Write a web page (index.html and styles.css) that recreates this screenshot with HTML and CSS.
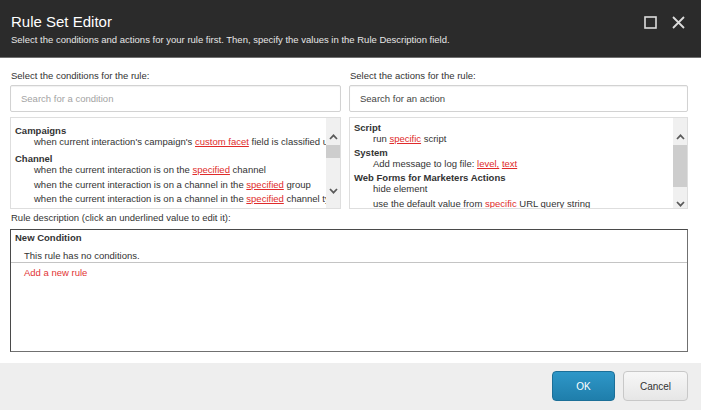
FILE: index.html
```
<!DOCTYPE html>
<html>
	<head>
		<meta charset="utf-8">
		<title>Rule Set Editor</title>
		<link rel="stylesheet" href="styles.css">
	</head>
	<body>
		<div class="dialog">
			<!-- 头部 -->
			<div class="hd">
				<div class="hd_text">
					<h1>Rule Set Editor</h1>
					<p>Select the conditions and actions for your rule first. Then, specify the values in the Rule Description field.</p>
				</div>
				<div class="hd_btns">
					<svg width="13" height="13" viewBox="0 0 13 13"><rect x="1" y="1" width="11" height="11" fill="none" stroke="#dcdcdc" stroke-width="1.6"/></svg>
					<svg width="13" height="13" viewBox="0 0 13 13"><path d="M1 1 L12 12 M12 1 L1 12" stroke="#dcdcdc" stroke-width="1.8"/></svg>
				</div>
			</div>

			<!-- 内容 -->
			<div class="bd">
				<div class="cols">
					<div class="col">
						<div class="label">Select the conditions for the rule:</div>
						<div class="search placeholder">Search for a condition</div>
						<div class="list list_left">
							<div class="items">
								<div class="group">
									<div class="title">Campaigns</div>
									<div class="item">when current interaction's campaign's <a>custom facet</a> field is classified under the specified</div>
								</div>
								<div class="group">
									<div class="title">Channel</div>
									<div class="item">when the current interaction is on the <a>specified</a> channel</div>
									<div class="item">when the current interaction is on a channel in the <a>specified</a> group</div>
									<div class="item">when the current interaction is on a channel in the <a>specified</a> channel type</div>
								</div>
							</div>
							<div class="bar">
								<div class="up"><svg width="9" height="6" viewBox="0 0 9 6"><polyline points="1,5 4.5,1.3 8,5" fill="none" stroke="#5a5a5a" stroke-width="1.7"/></svg></div>
								<div class="thumb"></div>
								<div class="space"></div>
								<div class="down"><svg width="9" height="6" viewBox="0 0 9 6"><polyline points="1,1 4.5,4.7 8,1" fill="none" stroke="#5a5a5a" stroke-width="1.7"/></svg></div>
							</div>
						</div>
					</div>
					<div class="col">
						<div class="label">Select the actions for the rule:</div>
						<div class="search">Search for an action</div>
						<div class="list list_right">
							<div class="items">
								<div class="group">
									<div class="title">Script</div>
									<div class="item">run <a>specific</a> script</div>
								</div>
								<div class="group">
									<div class="title">System</div>
									<div class="item">Add message to log file: <a>level,</a> <a>text</a></div>
								</div>
								<div class="group">
									<div class="title">Web Forms for Marketers Actions</div>
									<div class="item">hide element</div>
									<div class="item">use the default value from <a>specific</a> URL query string</div>
								</div>
							</div>
							<div class="bar">
								<div class="up"><svg width="9" height="6" viewBox="0 0 9 6"><polyline points="1,5 4.5,1.3 8,5" fill="none" stroke="#5a5a5a" stroke-width="1.7"/></svg></div>
								<div class="thumb"></div>
								<div class="space"></div>
								<div class="down"><svg width="9" height="6" viewBox="0 0 9 6"><polyline points="1,1 4.5,4.7 8,1" fill="none" stroke="#5a5a5a" stroke-width="1.7"/></svg></div>
							</div>
						</div>
					</div>
				</div>

				<div class="label label_desc">Rule description (click an underlined value to edit it):</div>
				<div class="desc">
					<div class="desc_title">New Condition</div>
					<div class="desc_none">This rule has no conditions.</div>
					<div class="desc_add">Add a new rule</div>
				</div>
			</div>

			<!-- 底部按钮 -->
			<div class="ft">
				<button type="button" class="ok">OK</button>
				<button type="button" class="cancel">Cancel</button>
			</div>
		</div>
	</body>
</html>
```

FILE: styles.css
```
*{
	margin: 0;
	padding: 0;
	box-sizing: border-box;
}
body{
	width: 701px;
	height: 410px;
	overflow: hidden;
	background-color: #fff;
	font-family: "Liberation Sans", Arial, sans-serif;
	font-size: 9.5px;
	color: #333;
}
.dialog{
	display: flex;
	flex-direction: column;
	height: 410px;
}

/* 头部 */
.hd{
	display: flex;
	justify-content: space-between;
	height: 58px;
	padding: 13px 16px 0 11px;
	background-color: #2b2b2b;
	border-bottom: 1px solid #707070;
}
.hd h1{
	font-size: 15px;
	font-weight: normal;
	line-height: 18px;
	color: #fff;
}
.hd p{
	margin-top: 3px;
	font-size: 9.5px;
	line-height: 12px;
	color: #e6e6e6;
}
.hd_btns{
	display: flex;
	gap: 15px;
	padding-top: 3px;
}

/* 内容 */
.bd{
	flex: 1;
	padding: 12px 13px 0 10px;
}
.cols{
	display: grid;
	grid-template-columns: 331px 339px;
	column-gap: 8px;
}
.label{
	height: 12px;
	padding-left: 1px;
	line-height: 12px;
	margin-bottom: 3px;
	color: #333;
}
.search{
	height: 27px;
	padding-left: 10px;
	line-height: 25px;
	border: 1px solid #d2d2d2;
	border-radius: 2px;
	box-shadow: inset 0 1px 1px rgba(0,0,0,.06);
	color: #444;
}
.placeholder{
	color: #a3a3a3;
}
.list{
	display: flex;
	height: 92px;
	margin-top: 5px;
	border: 1px solid #dedede;
	overflow: hidden;
}
.items{
	flex: 1;
	overflow: hidden;
	white-space: nowrap;
	padding-left: 4px;
}
.list_left .items{
	padding-top: 7px;
}
.list_left .group + .group{
	margin-top: 6px;
}
.list_right .items{
	padding-top: 4px;
}
.list_right .group + .group{
	margin-top: 3px;
}
.title{
	font-weight: bold;
	line-height: 11px;
}
.item{
	padding-left: 19px;
	line-height: 11px;
}
.item + .item{
	margin-top: 3.5px;
}
.item a{
	color: #e02b2b;
	text-decoration: underline;
}

/* 假滚动条 */
.bar{
	display: flex;
	flex-direction: column;
	width: 14px;
	background-color: #f0f0f0;
}
.up{
	height: 27px;
	padding-top: 16px;
	text-align: center;
}
.up svg, .down svg{
	display: block;
	margin: 0 auto;
}
.thumb{
	height: 13px;
	background-color: #cdcdcd;
}
.list_right .thumb{
	height: 42px;
}
.space{
	flex: 1;
}
.down{
	height: 20px;
}
.list_right .down{
	height: 7px;
}

/* 规则描述 */
.label_desc{
	margin-top: 3px;
	margin-bottom: 5px;
}
.desc{
	width: 678px;
	height: 123px;
	border: 1px solid #707070;
	border-top-color: #4a4a4a;
	border-left-color: #4a4a4a;
}
.desc_title{
	padding: 2px 4px 0;
	line-height: 12px;
	font-weight: bold;
}
.desc_none{
	padding: 6px 13px 0;
	line-height: 12px;
	border-bottom: 1px solid #c4c4c4;
}
.desc_add{
	padding: 4px 13px 0;
	line-height: 12px;
	color: #e23535;
}

/* 底部 */
.ft{
	display: flex;
	justify-content: flex-end;
	gap: 8px;
	height: 47px;
	padding: 8px 13px 0 0;
	background-color: #eee;
}
.ft button{
	height: 30px;
	border-radius: 4px;
	font-family: "Liberation Sans", Arial, sans-serif;
	font-size: 10px;
}
.ok{
	width: 63px;
	color: #fff;
	background: linear-gradient(#2e97c8, #1f7eab);
	border: 1px solid #1b6f98;
}
.cancel{
	width: 65px;
	color: #333;
	background: linear-gradient(#f7f7f7, #e6e6e6);
	border: 1px solid #c8c8c8;
}
```
